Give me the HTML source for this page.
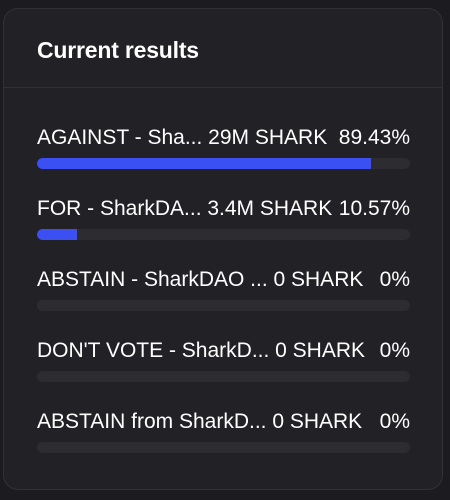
<!DOCTYPE html>
<html><head><style>
html,body{margin:0;width:450px;height:500px;background:#1c1b1f;overflow:hidden}
body{font-family:"Liberation Sans",sans-serif;color:#fff}
.card{position:absolute;left:3px;top:8px;width:438px;height:480px;border:1px solid #323136;border-radius:15px;background:#222126}
.title{position:absolute;left:33px;top:28px;font-size:23px;font-weight:bold;letter-spacing:-0.2px}
.div{position:absolute;left:0;right:0;top:78px;height:1px;background:#323136}
.row{position:absolute;left:33px;width:373px}
.t{display:flex;justify-content:space-between;font-size:21px;white-space:nowrap;height:26px;line-height:26px}
.bar{position:absolute;top:33px;left:0;width:373px;height:11px;border-radius:6px;background:#2d2c30;overflow:hidden}
.bar i{display:block;height:100%;background:#3b4ff2;border-radius:6px 0 0 6px}
</style></head><body>
<div class="card">
<div class="title">Current results</div>
<div class="div"></div>
<div class="row" style="top:116px"><div class="t"><span>AGAINST - Sha... 29M SHARK</span><span>89.43%</span></div><div class="bar"><i style="width:334px"></i></div></div>
<div class="row" style="top:187px"><div class="t"><span>FOR - SharkDA... 3.4M SHARK</span><span>10.57%</span></div><div class="bar"><i style="width:40px"></i></div></div>
<div class="row" style="top:258px"><div class="t"><span>ABSTAIN - SharkDAO ... 0 SHARK</span><span>0%</span></div><div class="bar"></div></div>
<div class="row" style="top:329px"><div class="t"><span>DON'T VOTE - SharkD... 0 SHARK</span><span>0%</span></div><div class="bar"></div></div>
<div class="row" style="top:400px"><div class="t"><span>ABSTAIN from SharkD... 0 SHARK</span><span>0%</span></div><div class="bar"></div></div>
</div>
</body></html>
